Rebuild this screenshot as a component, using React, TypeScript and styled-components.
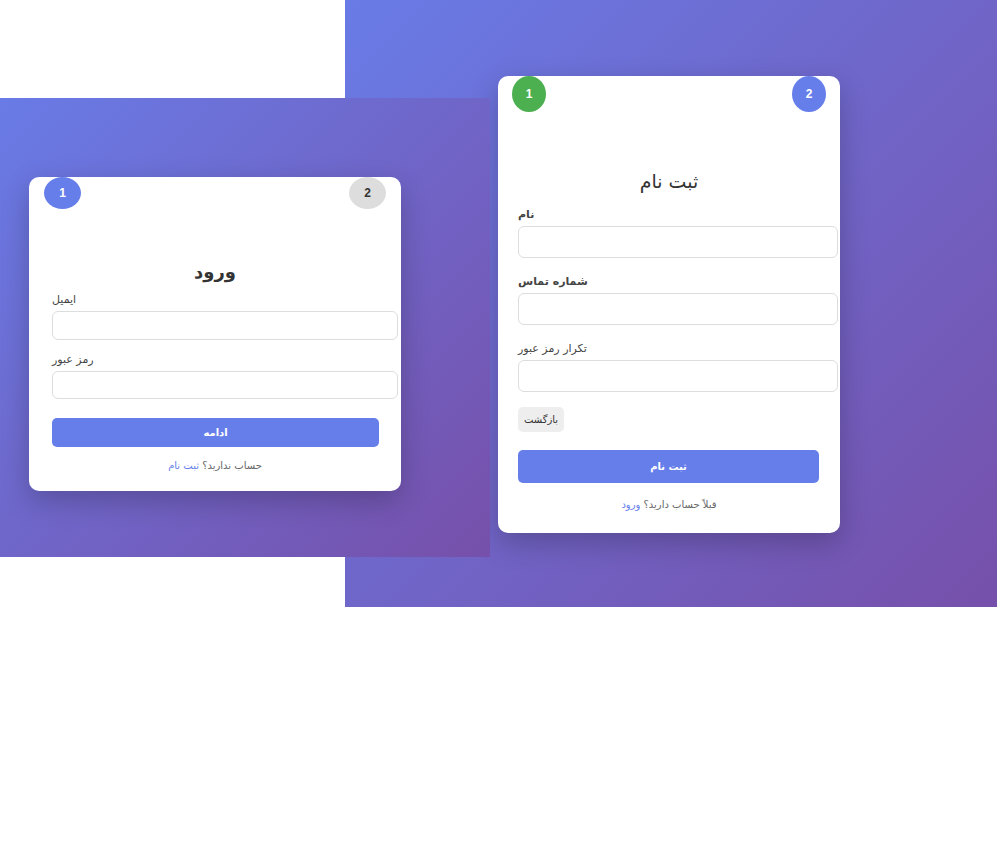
import React from 'react';
import styled, { createGlobalStyle } from 'styled-components';

const GlobalStyle = createGlobalStyle`
  * { box-sizing: border-box; }
  body {
    margin: 0;
    background: #fff;
    font-family: 'Liberation Sans', 'DejaVu Sans', sans-serif;
    color: #333;
  }
`;

// two gradient pages that overlap, placed on one grid
const Stage = styled.div`
  display: grid;
  width: 997px;
  grid-template-columns: 345px 145px 507px;
  grid-template-rows: 98px 459px 50px;
`;

const Panel = styled.div<{ $front?: boolean }>`
  display: flex;
  align-items: flex-start;
  background: linear-gradient(135deg, #697be6 0%, #7650aa 100%);
  ${(p) =>
    p.$front
      ? `
    grid-column: 1 / 3;
    grid-row: 2 / 3;
    z-index: 1;
    padding: 79px 0 0 29px;
  `
      : `
    grid-column: 2 / 4;
    grid-row: 1 / 4;
    padding: 76px 0 0 153px;
  `}
`;

const Card = styled.div<{ $width: number }>`
  width: ${(p) => p.$width}px;
  background: #fff;
  border-radius: 10px;
  box-shadow: 0 10px 28px rgba(0, 0, 0, 0.22);
  overflow: hidden;
`;

const Steps = styled.div`
  display: flex;
  justify-content: space-between;
  padding: 0 ${(p: { $inset: number }) => p.$inset}px;
`;

const Step = styled.div<{ $state: 'active' | 'done' | 'idle'; $w: number; $h: number }>`
  width: ${(p) => p.$w}px;
  height: ${(p) => p.$h}px;
  border-radius: 50%;
  display: flex;
  align-items: center;
  justify-content: center;
  font-size: 12px;
  font-weight: bold;
  background: ${(p) =>
    p.$state === 'active' ? '#667eea' : p.$state === 'done' ? '#4caf50' : '#dddddd'};
  color: ${(p) => (p.$state === 'idle' ? '#333' : '#fff')};
`;

const Body = styled.div<{ $pad: number; $bottom: number }>`
  padding: 0 ${(p) => p.$pad}px ${(p) => p.$bottom}px;
`;

const Title = styled.h2<{ $top: number; $size: number; $bold?: boolean }>`
  margin: ${(p) => p.$top}px 0 0;
  text-align: center;
  font-family: 'DejaVu Sans', sans-serif;
  font-size: ${(p) => p.$size}px;
  line-height: 22px;
  font-weight: ${(p) => (p.$bold ? 'bold' : 'normal')};
  color: #333;
`;

const Label = styled.label<{ $top: number; $bold?: boolean }>`
  display: block;
  margin-top: ${(p) => p.$top}px;
  font-family: 'DejaVu Sans', sans-serif;
  font-size: 11px;
  line-height: 14px;
  font-weight: ${(p) => (p.$bold ? 'bold' : 'normal')};
  color: #444;
`;

const Input = styled.input<{ $h: number; $px: number }>`
  display: block;
  box-sizing: content-box;
  width: 100%;
  height: ${(p) => p.$h - 2}px;
  margin-top: 4px;
  padding: 0 ${(p) => p.$px}px;
  border: 1px solid #dddddd;
  border-radius: 6px;
  background: #fff;
  font-size: 13px;
  outline: none;
`;

const BackButton = styled.button`
  display: block;
  margin-top: 15px;
  width: 46px;
  height: 25px;
  border: none;
  border-radius: 5px;
  background: #eeeeee;
  color: #333;
  font-family: 'DejaVu Sans', sans-serif;
  font-size: 10px;
  padding: 0;
`;

const PrimaryButton = styled.button<{ $top: number; $h: number; $w: number }>`
  display: block;
  margin-top: ${(p) => p.$top}px;
  width: ${(p) => p.$w}px;
  height: ${(p) => p.$h}px;
  border: none;
  border-radius: 5px;
  background: #667eea;
  color: #fff;
  font-family: 'DejaVu Sans', sans-serif;
  font-size: 10px;
  font-weight: bold;
  padding: 0;
`;

const Footer = styled.p<{ $top: number }>`
  margin: ${(p) => p.$top}px 0 0;
  text-align: center;
  font-family: 'DejaVu Sans', sans-serif;
  font-size: 10px;
  line-height: 14px;
  color: #666;

  a {
    color: #667eea;
    text-decoration: none;
  }
`;

const LoginCard = () => (
  <Card $width={372}>
    <Steps $inset={15}>
      <Step $state="active" $w={37} $h={32}>1</Step>
      <Step $state="idle" $w={37} $h={32}>2</Step>
    </Steps>
    <Body $pad={23} $bottom={18}>
      <Title $top={52} $size={18} $bold>
        ورود
      </Title>
      <Label $top={10}>ایمیل</Label>
      <Input $h={29} $px={9} type="email" />
      <Label $top={13}>رمز عبور</Label>
      <Input $h={28} $px={9} type="password" />
      <PrimaryButton $top={19} $h={29} $w={327}>
        ادامه
      </PrimaryButton>
      <Footer $top={12}>
        حساب ندارید؟ <a href="#">ثبت نام</a>
      </Footer>
    </Body>
  </Card>
);

const SignupCard = () => (
  <Card $width={342}>
    <Steps $inset={14}>
      <Step $state="done" $w={34} $h={36}>1</Step>
      <Step $state="active" $w={34} $h={36}>2</Step>
    </Steps>
    <Body $pad={20} $bottom={21}>
      <Title $top={58} $size={19}>
        ثبت نام
      </Title>
      <Label $top={16} $bold>
        نام
      </Label>
      <Input $h={32} $px={8} type="text" />
      <Label $top={17} $bold>
        شماره تماس
      </Label>
      <Input $h={32} $px={8} type="tel" />
      <Label $top={17}>تکرار رمز عبور</Label>
      <Input $h={32} $px={8} type="password" />
      <BackButton>بازگشت</BackButton>
      <PrimaryButton $top={18} $h={33} $w={301}>
        ثبت نام
      </PrimaryButton>
      <Footer $top={15}>
        قبلاً حساب دارید؟ <a href="#">ورود</a>
      </Footer>
    </Body>
  </Card>
);

export default function App() {
  return (
    <>
      <GlobalStyle />
      <Stage>
        <Panel>
          <SignupCard />
        </Panel>
        <Panel $front>
          <LoginCard />
        </Panel>
      </Stage>
    </>
  );
}
